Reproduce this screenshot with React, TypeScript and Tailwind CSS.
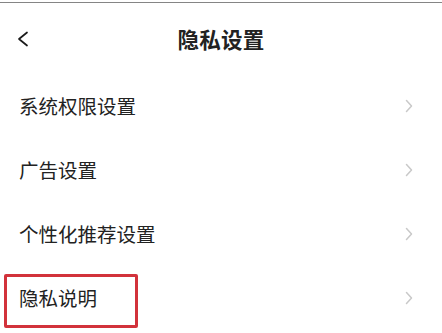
const rows = ["系统权限设置", "广告设置", "个性化推荐设置", "隐私说明"];

const ChevronRight = () => (
  <svg width="8" height="14" viewBox="0 0 8 14" fill="none" className="shrink-0">
    <path d="M1.5 1.5 L6.5 7 L1.5 12.5" stroke="#c9c9c9" strokeWidth="1.5" strokeLinecap="round" strokeLinejoin="round" />
  </svg>
);

export default function App() {
  return (
    <div
      className="w-[442px] h-[333px] bg-white overflow-hidden text-[#222]"
      style={{ fontFamily: '"Noto Sans CJK SC", "Noto Sans", sans-serif' }}
    >
      <div className="pt-[2px]">
        <div className="h-px bg-[#858585]" />
      </div>

      {/* Header */}
      <div className="h-[71px] relative flex items-center justify-center">
        <button className="absolute left-[17px] top-[28px] w-[12px] h-[16px] flex items-center justify-center">
          <svg width="12" height="16" viewBox="0 0 12 16" fill="none">
            <path d="M10 1.5 L2 8 L10 14.5" stroke="#1a1a1a" strokeWidth="1.7" strokeLinecap="round" strokeLinejoin="round" />
          </svg>
        </button>
        <h1 className="text-[21.5px] font-bold leading-none tracking-[0.2px]">隐私设置</h1>
      </div>

      {/* Rows */}
      <div className="flex flex-col">
        {rows.map((label, i) => (
          <div key={label} className="relative h-[64px] flex items-center pl-[19px] pr-[29px]">
            <span className="text-[19.5px] leading-none">{label}</span>
            <div className="ml-auto">
              <ChevronRight />
            </div>
            {i === rows.length - 1 && (
              <div className="absolute left-[4px] top-[8px] w-[134px] h-[54px] border-[3px] border-[#d2323b] rounded-[2px]" />
            )}
          </div>
        ))}
      </div>
    </div>
  );
}
